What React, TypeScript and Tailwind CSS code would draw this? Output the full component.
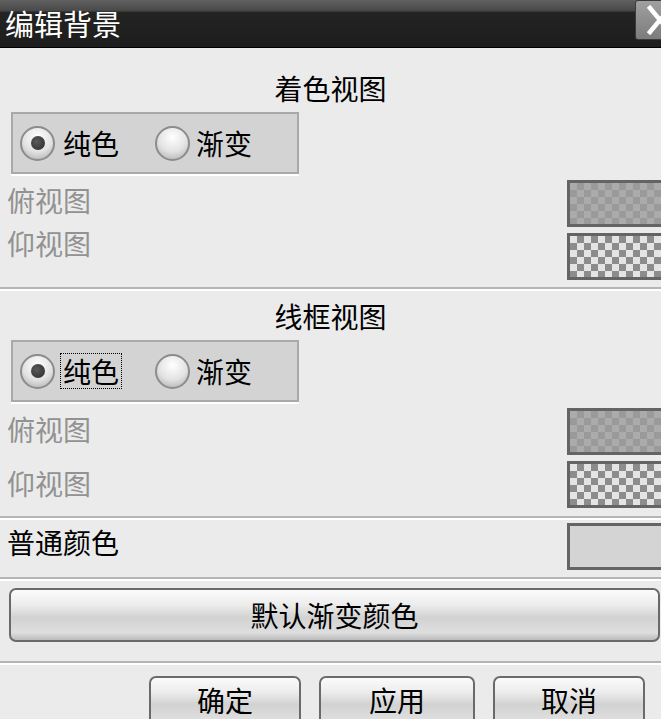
import React from "react";

const font = "font-['Noto_Sans_CJK_SC','Noto_Sans',sans-serif]";

function Separator() {
  return (
    <div>
      <div className="h-[2px] bg-[#b5b5b5]" />
      <div className="h-[2px] bg-white" />
    </div>
  );
}

function Radio({ checked }: { checked: boolean }) {
  return (
    <span className="flex h-[35px] w-[35px] shrink-0 items-center justify-center rounded-full border-2 border-[#8c8c8c] bg-[radial-gradient(circle_at_50%_30%,#ffffff,#e2e2e2_55%,#a8a8a8)]">
      {checked && (
        <span className="h-[14px] w-[14px] rounded-full bg-[radial-gradient(circle_at_40%_40%,#5a5a5a,#2a2a2a)]" />
      )}
    </span>
  );
}

function RadioGroup({ focused }: { focused?: boolean }) {
  return (
    <div className="ml-[11px] flex h-[62px] w-[288px] items-center border-2 border-[#a9a9a9] bg-[#d3d3d3] pl-[7px] text-[28px] text-black shadow-[0_2px_0_#fff]">
      <Radio checked />
      <span
        className={
          focused
            ? "ml-[8px] leading-[30px] outline-1 outline-offset-2 outline-dotted outline-black"
            : "ml-[8px] leading-[30px]"
        }
      >
        纯色
      </span>
      <span className="ml-[36px]">
        <Radio checked={false} />
      </span>
      <span className="ml-[6px] leading-[30px]">渐变</span>
    </div>
  );
}

function Swatch({ kind }: { kind: "dark" | "light" | "solid" }) {
  const fill =
    kind === "dark"
      ? "bg-[conic-gradient(#9a9a9a_25%,#ababab_0_50%,#9a9a9a_0_75%,#ababab_0)] bg-[length:14px_14px]"
      : kind === "light"
      ? "bg-[conic-gradient(#8c8c8c_25%,#e4e4e4_0_50%,#8c8c8c_0_75%,#e4e4e4_0)] bg-[length:14px_14px]"
      : "bg-[#d4d4d4]";
  return (
    <div
      className={`h-[47px] w-[94px] border-[3px] border-r-0 border-[#646464] ${fill}`}
    />
  );
}

function Button({ label, className }: { label: string; className: string }) {
  return (
    <button
      className={`flex justify-center rounded-[7px] border-2 border-[#6a6a6a] bg-[linear-gradient(#fbfbfb,#ececec_30%,#d2d2d2_55%,#dedede_85%,#bcbcbc)] text-[28px] leading-[30px] text-black ${className}`}
    >
      {label}
    </button>
  );
}

export default function App() {
  return (
    <div
      className={`h-[719px] w-[661px] overflow-hidden bg-[#ebebeb] ${font}`}
    >
      {/* title bar */}
      <div className="flex h-[48px] items-start border-b border-black bg-[linear-gradient(#606060,#4a4a4a_22%,#232323_27%,#1d1d1d)]">
        <span className="pl-[5px] pt-[8px] text-[29px] leading-[30px] text-white">
          编辑背景
        </span>
        <div className="ml-auto flex h-[40px] w-[50px] shrink-0 translate-x-[24px] items-center justify-center rounded-[3px] border border-[#3a3a3a] bg-[linear-gradient(#a0a0a0,#7c7c7c)]">
          <svg width="26" height="30" viewBox="0 0 26 30">
            <path
              d="M3 3 L23 27 M23 3 L3 27"
              stroke="#fff"
              strokeWidth="4.5"
              strokeLinecap="square"
            />
          </svg>
        </div>
      </div>

      {/* shaded view */}
      <div className="pt-[25px]">
        <div className="text-center text-[28px] leading-[30px] text-black">
          着色视图
        </div>
        <div className="mt-[9px]">
          <RadioGroup />
        </div>
      </div>
      <div className="flex h-[113px]">
        <div className="pl-[7px] pt-[5px] text-[28px] leading-[43px] text-[#929292]">
          <div>俯视图</div>
          <div>仰视图</div>
        </div>
        <div className="ml-auto flex flex-col gap-[6px] pt-[6px]">
          <Swatch kind="dark" />
          <Swatch kind="light" />
        </div>
      </div>
      <Separator />

      {/* wireframe view */}
      <div className="pt-[10px]">
        <div className="text-center text-[28px] leading-[30px] text-black">
          线框视图
        </div>
        <div className="mt-[9px]">
          <RadioGroup focused />
        </div>
      </div>
      <div className="flex h-[114px]">
        <div className="pl-[7px] text-[28px] leading-[54px] text-[#929292]">
          <div>俯视图</div>
          <div>仰视图</div>
        </div>
        <div className="ml-auto flex flex-col gap-[6px] pt-[6px]">
          <Swatch kind="dark" />
          <Swatch kind="light" />
        </div>
      </div>
      <Separator />

      {/* common colour */}
      <div className="flex h-[57px] items-start">
        <span className="pl-[7px] pt-[7px] text-[28px] leading-[30px] text-black">
          普通颜色
        </span>
        <div className="ml-auto pt-[3px]">
          <Swatch kind="solid" />
        </div>
      </div>
      <Separator />

      <div className="h-[80px] pl-[9px] pr-[1px] pt-[7px]">
        <Button label="默认渐变颜色" className="h-[54px] w-full items-center" />
      </div>
      <Separator />

      <div className="flex justify-end gap-[18px] pr-[16px] pt-[11px]">
        <Button label="确定" className="h-[52px] w-[152px] items-start pt-[7px]" />
        <Button label="应用" className="h-[52px] w-[156px] items-start pt-[7px]" />
        <Button label="取消" className="h-[52px] w-[152px] items-start pt-[7px]" />
      </div>
    </div>
  );
}
